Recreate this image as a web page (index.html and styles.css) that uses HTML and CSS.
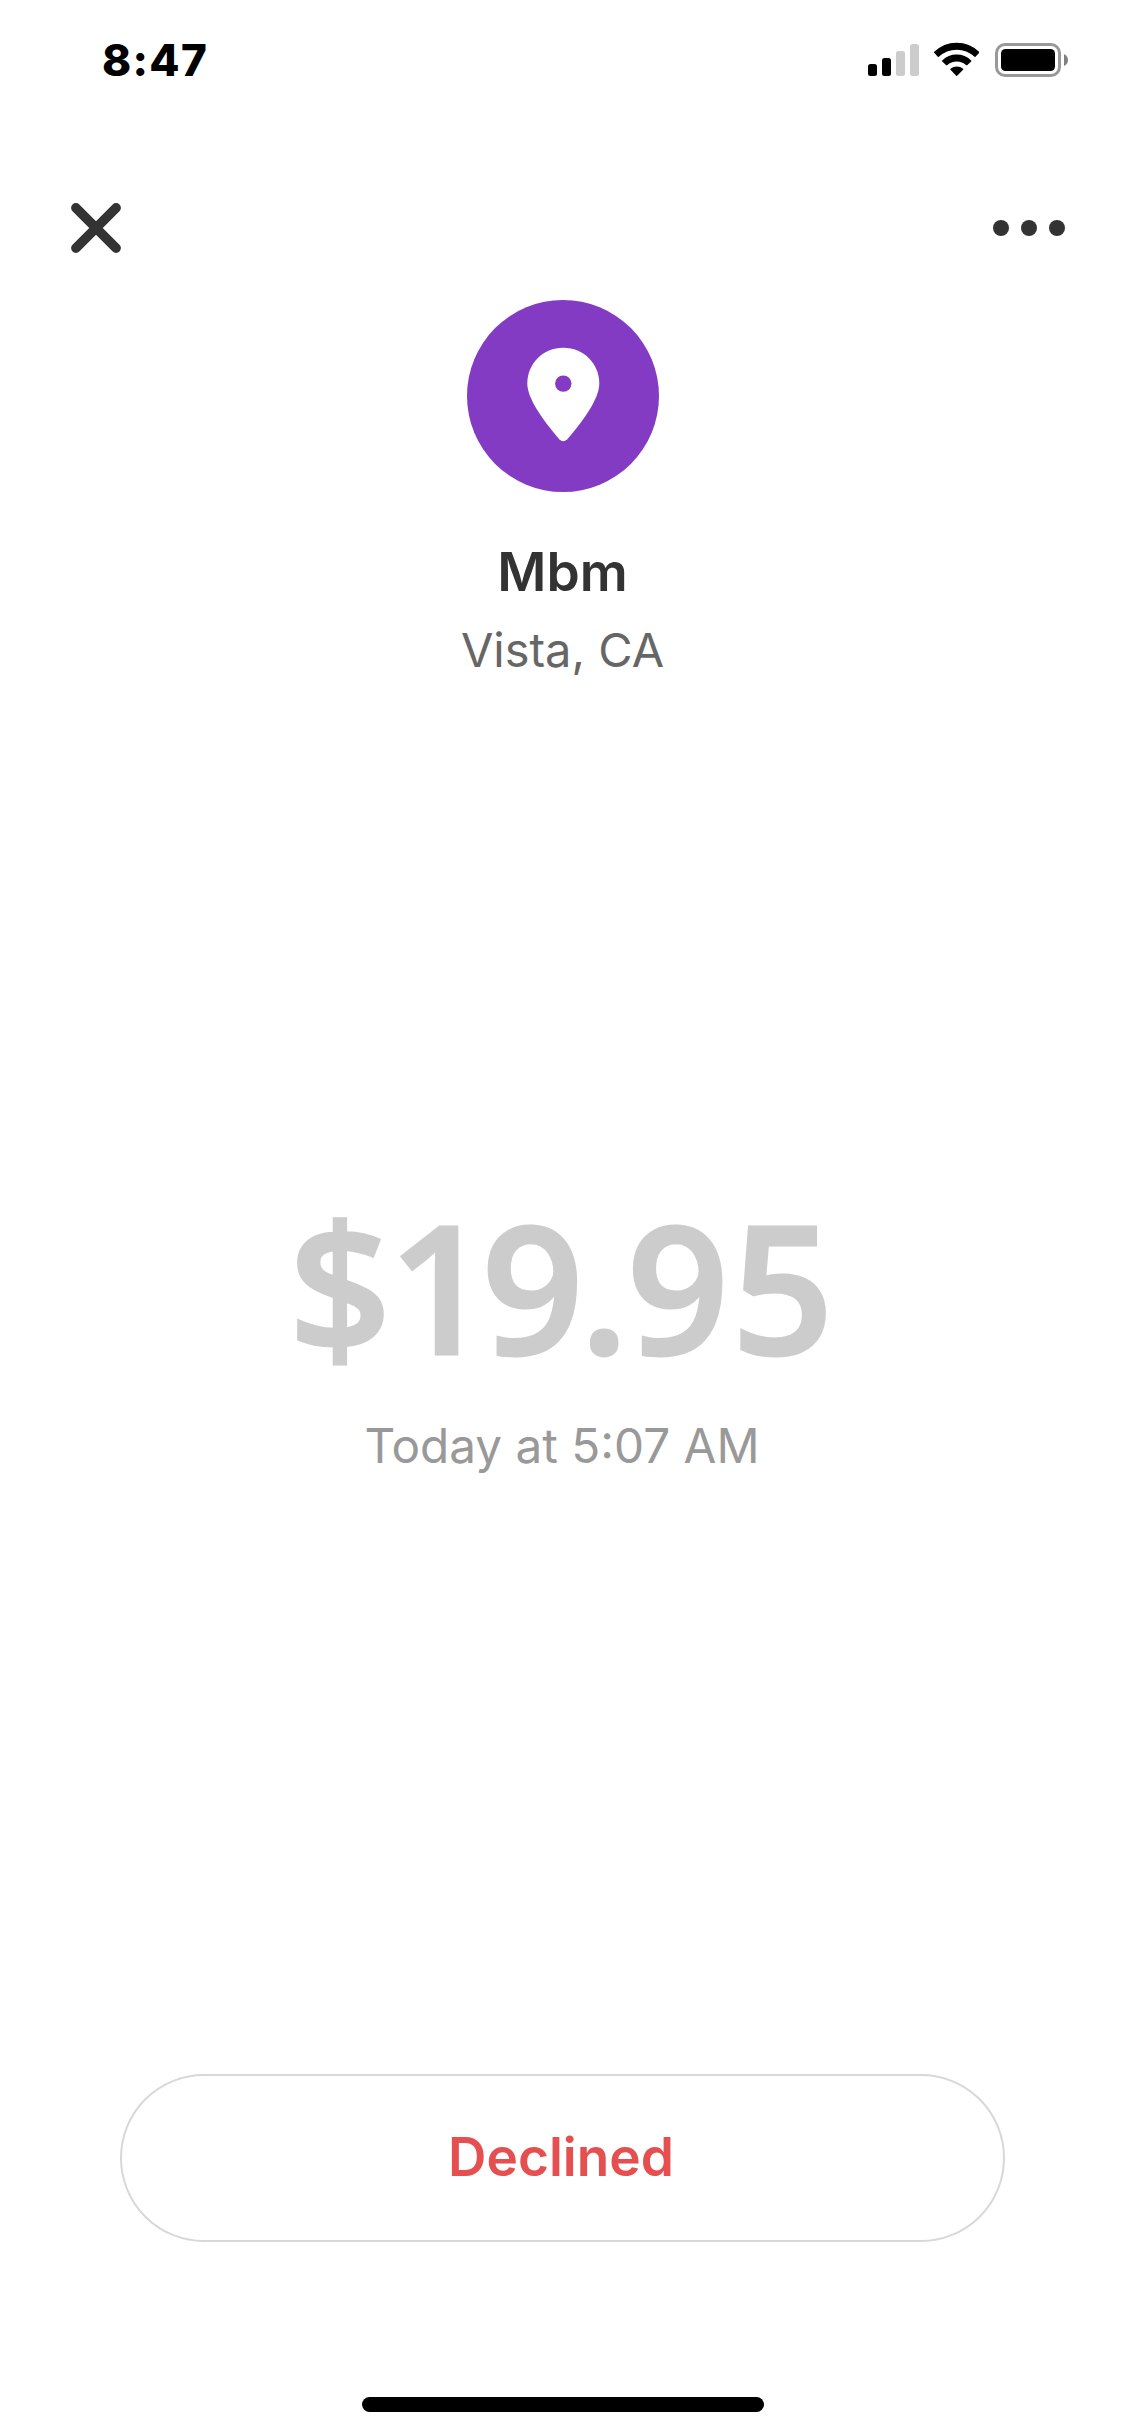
FILE: index.html
```html
<!DOCTYPE html>
<html lang="en">
<head>
<meta charset="utf-8">
<title>Mbm – Declined</title>
<link rel="stylesheet" href="styles.css">
</head>
<body>
<div class="screen">
  <div class="status-bar">
    <span class="time">8:47</span>
    <div class="indicators">
      <svg class="signal" viewBox="0 0 51 32" aria-hidden="true">
        <rect x="0" y="20" width="9" height="12" rx="2.5"/>
        <rect x="14" y="14" width="9" height="18" rx="2.5"/>
        <rect class="weak" x="28" y="7" width="9" height="25" rx="2.5"/>
        <rect class="weak" x="42" y="0" width="9" height="32" rx="2.5"/>
      </svg>
      <svg class="wifi" viewBox="0 0 138 102" aria-hidden="true">
        <path d="M5 31A94 94 0 0 1 137 31L126 43A80 80 0 0 0 16 43Z"/>
        <path d="M29 57A60 60 0 0 1 113 57L101 68A44 44 0 0 0 41 68Z"/>
        <path d="M54 82A27 27 0 0 1 89 82L71 100Z"/>
      </svg>
      <svg class="battery" viewBox="0 0 74 34" aria-hidden="true">
        <rect class="case" x="1.5" y="1.5" width="63" height="31" rx="8.5"/>
        <rect x="6" y="6" width="54" height="22" rx="4.5"/>
        <path class="cap" d="M69 11Q73 13 73 17T69 23Z"/>
      </svg>
    </div>
  </div>

  <div class="nav">
    <button class="icon-button" aria-label="Close">
      <svg class="close" viewBox="0 0 50 50"><path d="M4.9 4.9 45.1 45.1M45.1 4.9 4.9 45.1"/></svg>
    </button>
    <button class="icon-button" aria-label="More">
      <svg class="more" viewBox="0 0 72 16"><circle cx="8" cy="8" r="8"/><circle cx="36" cy="8" r="8"/><circle cx="64" cy="8" r="8"/></svg>
    </button>
  </div>

  <header class="merchant">
    <svg class="avatar" viewBox="0 0 192 192" aria-hidden="true">
      <circle class="disc" cx="96" cy="96" r="96"/>
      <path class="pin" d="M96.300 47.700C76 47.700 60.300 63.500 60.300 83.500C60.300 97.500 74 118 92.500 139.600Q96.300 143 100.100 139.600C118.600 118 132.300 97.500 132.300 83.500C132.300 63.500 116.600 47.700 96.300 47.700Z"/>
      <circle class="disc" cx="96.300" cy="83.600" r="8.200"/>
    </svg>
    <h1 class="name">Mbm</h1>
    <p class="place">Vista, CA</p>
  </header>

  <main class="payment">
    <p class="amount"><span class="currency">$</span><span class="one">1</span><span class="nine">9</span>.<span class="tenths">9</span>5</p>
    <p class="date">Today at 5:07 AM</p>
  </main>

  <footer class="footer">
    <button class="status">Declined</button>
    <div class="home-indicator"></div>
  </footer>
</div>
</body>
</html>
```
FILE: styles.css
```css
* { box-sizing: border-box; margin: 0; padding: 0; }

body {
  background: #fff;
  font-family: "Inter", "Liberation Sans", sans-serif;
}

svg { display: block; }

button {
  border: 0;
  background: none;
  font: inherit;
}

.screen {
  display: flex;
  flex-direction: column;
  width: 1125px;
  height: 2436px;
  overflow: hidden;
}

.status-bar {
  display: flex;
  justify-content: space-between;
  align-items: flex-start;
  height: 132px;
  padding: 33px 56px 0 102px;
  color: #000;
}

.time {
  font-size: 44px;
  font-weight: 800;
  line-height: 54px;
  letter-spacing: 1.3px;
}

.indicators {
  display: flex;
  align-items: flex-start;
  padding-top: 10px;
}

.signal { width: 51px; height: 32px; margin: 1px 14px 0 0; }
.signal .weak { fill: #ccc; }
.wifi { width: 46px; height: 34px; margin: -1px 16px 0 0; }
.wifi path { stroke: #000; stroke-width: 4; stroke-linejoin: round; }
.battery { width: 74px; height: 34px; }
.battery .case { fill: none; stroke: #999; stroke-width: 3; }
.battery .cap { fill: #808080; }

.nav {
  display: flex;
  justify-content: space-between;
  align-items: center;
  height: 168px;
  padding: 0 60px 0 71px;
}

.icon-button {
  display: flex;
  align-items: center;
  height: 100px;
  margin-top: 24px;
}

.close { width: 50px; height: 50px; }
.close path { fill: none; stroke: #333; stroke-width: 9.600px; stroke-linecap: round; }
.more { width: 72px; height: 16px; fill: #333; }

.merchant {
  display: flex;
  flex-direction: column;
  align-items: center;
}

.avatar { width: 192px; height: 192px; margin-left: 1px; }
.disc { fill: #843bc4; }
.pin { fill: #fff; }

.name {
  margin-top: 48px;
  color: #333;
  font-size: 53.300px;
  font-weight: 600;
  line-height: 64px;
}

.place {
  margin-top: 17px;
  color: #666;
  font-size: 47px;
  line-height: 57px;
}

.payment {
  flex: 1;
  display: flex;
  flex-direction: column;
  align-items: center;
  padding-top: 484px;
}

.amount {
  padding-right: 4px;
  color: #ccc;
  font-family: "Open Sans", "Noto Sans", sans-serif;
  font-size: 178px;
  font-weight: 600;
  line-height: 246px;
  letter-spacing: -1.7px;
  -webkit-text-stroke: 3px #ccc;
  stroke-linejoin: round;
}

/* Pair kerning for the large figures */
.currency { letter-spacing: -2.2px; }
.one { letter-spacing: -8.9px; }
.nine { letter-spacing: -3.7px; }
.tenths { letter-spacing: 3px; }

.date {
  margin-top: 9px;
  padding-right: 1px;
  color: #999;
  font-size: 47.700px;
  line-height: 58px;
}

.footer {
  display: flex;
  flex-direction: column;
  align-items: center;
  padding-bottom: 24px;
}

.status {
  width: 885px;
  height: 168px;
  padding: 0 3px 3px 0;
  border: 2px solid #d8d8d8;
  border-radius: 84px;
  color: #e54f4f;
  font-size: 53.200px;
  font-weight: 600;
  line-height: 64px;
}

.home-indicator {
  width: 402px;
  height: 15px;
  margin-top: 155px;
  border-radius: 8px;
  background: #000;
}
```
